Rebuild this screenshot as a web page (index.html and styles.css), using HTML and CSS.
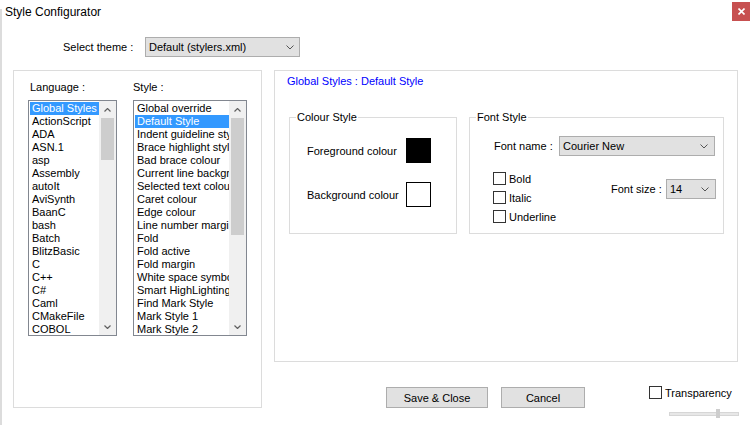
FILE: index.html
```html
<!DOCTYPE html>
<html>
<head>
<meta charset="utf-8">
<link rel="stylesheet" href="styles.css">
</head>
<body>
<div class="window">
  <div class="titlebar">
    <span class="title">Style Configurator</span>
    <div class="close"><svg width="7" height="7" viewBox="0 0 7 7"><path d="M0.5 0.5 L6.5 6.5 M6.5 0.5 L0.5 6.5" stroke="#fff" stroke-width="1.6" fill="none"/></svg></div>
  </div>

  <div class="theme-row">
    <span class="theme-label">Select theme :</span>
    <div class="combo theme-combo"><span>Default (stylers.xml)</span><svg class="chev" width="8" height="5" viewBox="0 0 8 5"><polyline points="0.5,0.5 4,4 7.5,0.5" stroke="#555" fill="none"/></svg></div>
  </div>

  <div class="main">
    <div class="lang-box">
      <div class="lang-col">
        <div class="col-label">Language :</div>
        <div class="listbox">
          <ul class="items">
            <li class="sel">Global Styles</li>
            <li>ActionScript</li>
            <li>ADA</li>
            <li>ASN.1</li>
            <li>asp</li>
            <li>Assembly</li>
            <li>autoIt</li>
            <li>AviSynth</li>
            <li>BaanC</li>
            <li>bash</li>
            <li>Batch</li>
            <li>BlitzBasic</li>
            <li>C</li>
            <li>C++</li>
            <li>C#</li>
            <li>Caml</li>
            <li>CMakeFile</li>
            <li>COBOL</li>
          </ul>
          <div class="vscroll">
            <div class="sb-btn"><svg width="7" height="4" viewBox="0 0 7 4"><polyline points="0.5,3.5 3.5,0.5 6.5,3.5" stroke="#606060" stroke-width="1.2" fill="none"/></svg></div>
            <div class="track"><div class="thumb thumb-lang"></div></div>
            <div class="sb-btn"><svg width="7" height="4" viewBox="0 0 7 4"><polyline points="0.5,0.5 3.5,3.5 6.5,0.5" stroke="#606060" stroke-width="1.2" fill="none"/></svg></div>
          </div>
        </div>
      </div>
      <div class="style-col">
        <div class="col-label">Style :</div>
        <div class="listbox">
          <ul class="items">
            <li>Global override</li>
            <li class="sel">Default Style</li>
            <li>Indent guideline style</li>
            <li>Brace highlight style</li>
            <li>Bad brace colour</li>
            <li>Current line background colour</li>
            <li>Selected text colour</li>
            <li>Caret colour</li>
            <li>Edge colour</li>
            <li>Line number margin</li>
            <li>Fold</li>
            <li>Fold active</li>
            <li>Fold margin</li>
            <li>White space symbol</li>
            <li>Smart HighLighting</li>
            <li>Find Mark Style</li>
            <li>Mark Style 1</li>
            <li>Mark Style 2</li>
          </ul>
          <div class="vscroll">
            <div class="sb-btn"><svg width="7" height="4" viewBox="0 0 7 4"><polyline points="0.5,3.5 3.5,0.5 6.5,3.5" stroke="#606060" stroke-width="1.2" fill="none"/></svg></div>
            <div class="track"><div class="thumb thumb-style"></div></div>
            <div class="sb-btn"><svg width="7" height="4" viewBox="0 0 7 4"><polyline points="0.5,0.5 3.5,3.5 6.5,0.5" stroke="#606060" stroke-width="1.2" fill="none"/></svg></div>
          </div>
        </div>
      </div>
    </div>

    <div class="right">
      <div class="panel">
        <div class="panel-title">Global Styles : Default Style</div>
        <div class="groups">
          <div class="group colour-group">
            <div class="group-title">Colour Style</div>
            <div class="crow"><span class="clabel">Foreground colour</span><div class="swatch black"></div></div>
            <div class="crow"><span class="clabel">Background colour</span><div class="swatch"></div></div>
          </div>
          <div class="group font-group">
            <div class="group-title">Font Style</div>
            <div class="fname-row">
              <span class="fname-label">Font name :</span>
              <div class="combo fname-combo"><span>Courier New</span><svg class="chev" width="8" height="5" viewBox="0 0 8 5"><polyline points="0.5,0.5 4,4 7.5,0.5" stroke="#555" fill="none"/></svg></div>
            </div>
            <div class="font-opts">
              <div class="checks">
                <label class="check"><span class="box"></span><span>Bold</span></label>
                <label class="check"><span class="box"></span><span>Italic</span></label>
                <label class="check"><span class="box"></span><span>Underline</span></label>
              </div>
              <div class="size-row">
                <span class="size-label">Font size :</span>
                <div class="combo size-combo"><span>14</span><svg class="chev" width="8" height="5" viewBox="0 0 8 5"><polyline points="0.5,0.5 4,4 7.5,0.5" stroke="#555" fill="none"/></svg></div>
              </div>
            </div>
          </div>
        </div>
      </div>
      <div class="bottom">
        <div class="btn btn-save">Save &amp; Close</div>
        <div class="btn btn-cancel">Cancel</div>
        <div class="transp">
          <label class="check"><span class="box"></span><span>Transparency</span></label>
          <div class="slider"><div class="slider-track"></div><div class="slider-thumb"></div></div>
        </div>
      </div>
    </div>
  </div>
</div>
</body>
</html>
```

FILE: styles.css
```css
body {
  margin: 0;
  font-family: "Liberation Sans", Arial, sans-serif;
  font-size: 11px;
  color: #000;
  background: #fff;
}

.window {
  width: 750px;
  height: 425px;
  background: linear-gradient(#dcdcdc, #dcdcdc) no-repeat 0 9px / 2px 416px, #fff;
  display: flex;
  flex-direction: column;
  overflow: hidden;
}

.titlebar {
  display: flex;
  justify-content: space-between;
  height: 25px;
}

.title {
  font-size: 12px;
  line-height: 16px;
  padding: 4px 0 0 5px;
}

.close {
  margin-top: 2px;
  width: 18px;
  height: 19px;
  background: #c75050;
  display: flex;
  align-items: center;
  justify-content: center;
}

.theme-row {
  display: flex;
  align-items: center;
  margin-top: 12px;
  padding-left: 63px;
  height: 20px;
}

.theme-label { width: 82px; }

.combo {
  box-sizing: border-box;
  height: 20px;
  border: 1px solid #adadad;
  background: #e1e1e1;
  display: flex;
  align-items: center;
  justify-content: space-between;
  padding: 0 6px 0 3px;
}

.theme-combo { width: 155px; padding-right: 5px; }

.main {
  display: flex;
  margin-top: 13px;
  padding-left: 13px;
  gap: 12px;
}

.lang-box {
  box-sizing: border-box;
  width: 249px;
  height: 338px;
  border: 1px solid #dcdcdc;
  padding: 9px 0 0 14px;
  display: flex;
  gap: 16px;
}

.col-label {
  line-height: 14px;
  height: 14px;
  margin-bottom: 6px;
}

.lang-col { width: 89px; }
.lang-col .col-label { padding-left: 2px; }
.style-col { width: 114px; }

.listbox {
  box-sizing: border-box;
  height: 236px;
  border: 1px solid #828790;
  display: flex;
}

.items {
  list-style: none;
  margin: 0;
  padding: 1px 0 0 1px;
  flex: 1;
  min-width: 0;
  overflow: hidden;
}

.items li {
  height: 13px;
  line-height: 13px;
  padding-left: 2px;
  white-space: nowrap;
  overflow: hidden;
}

.items li.sel {
  background: #3399ff;
  color: #fff;
}

.vscroll {
  flex: none;
  width: 17px;
  background: #f0f0f0;
  display: flex;
  flex-direction: column;
}

.sb-btn {
  height: 17px;
  display: flex;
  align-items: center;
  justify-content: center;
}

.track { flex: 1; }

.thumb {
  margin: 0 2px;
  background: #cdcdcd;
}

.thumb-lang { height: 42px; }
.thumb-style { height: 117px; }

.right {
  width: 465px;
  display: flex;
  flex-direction: column;
}

.panel {
  box-sizing: border-box;
  width: 464px;
  height: 292px;
  border: 1px solid #dcdcdc;
  padding: 3px 0 0 12px;
}

.panel-title {
  color: #0000ff;
  line-height: 14px;
}

.groups {
  display: flex;
  gap: 12px;
  margin-top: 29px;
  padding-left: 2px;
  align-items: flex-start;
}

.group {
  box-sizing: border-box;
  border: 1px solid #dcdcdc;
  height: 117px;
}

.colour-group { width: 168px; }
.font-group { width: 255px; }

.group-title {
  width: fit-content;
  margin: -8px 0 0 6px;
  padding: 0 1px;
  background: #fff;
  line-height: 14px;
}

.crow {
  display: flex;
  align-items: center;
  padding-left: 17px;
  margin-top: 14px;
}

.crow + .crow { margin-top: 19px; }

.clabel { width: 99px; }

.swatch {
  box-sizing: border-box;
  width: 25px;
  height: 25px;
  border: 1px solid #000;
  background: #fff;
}

.swatch.black { background: #000; }

.fname-row {
  display: flex;
  align-items: center;
  padding-left: 24px;
  margin-top: 12px;
}

.fname-label { width: 65px; }
.fname-combo { width: 156px; }

.font-opts {
  display: flex;
  align-items: flex-start;
  margin-top: 16px;
  padding: 0 7px 0 23px;
}

.checks {
  display: flex;
  flex-direction: column;
  gap: 6px;
}

.check {
  display: flex;
  align-items: center;
  gap: 3px;
  height: 13px;
}

.box {
  box-sizing: border-box;
  width: 13px;
  height: 13px;
  border: 1px solid #333;
  background: #fff;
}

.size-row {
  margin-left: auto;
  margin-top: 7px;
  display: flex;
  align-items: center;
}

.size-label { width: 55px; }
.size-combo { width: 50px; }

.bottom {
  display: flex;
  align-items: flex-start;
  margin-top: 25px;
  padding-left: 112px;
  gap: 13px;
}

.btn {
  box-sizing: border-box;
  height: 21px;
  border: 1px solid #adadad;
  background: #e1e1e1;
  display: flex;
  align-items: center;
  justify-content: center;
}

.btn-save { width: 102px; }
.btn-cancel { width: 84px; }

.transp {
  margin-left: auto;
  width: 90px;
  margin-top: -1px;
  display: flex;
  flex-direction: column;
}

.slider {
  position: relative;
  margin: 10px 0 0 20px;
  width: 70px;
  height: 9px;
  display: flex;
  align-items: center;
}

.slider-track {
  box-sizing: border-box;
  width: 70px;
  height: 4px;
  background: #e7e7e7;
  border: 1px solid #d6d6d6;
}

.slider-thumb {
  position: absolute;
  left: 47px;
  top: 0;
  width: 4px;
  height: 9px;
  background: #cdcdcd;
}
```
